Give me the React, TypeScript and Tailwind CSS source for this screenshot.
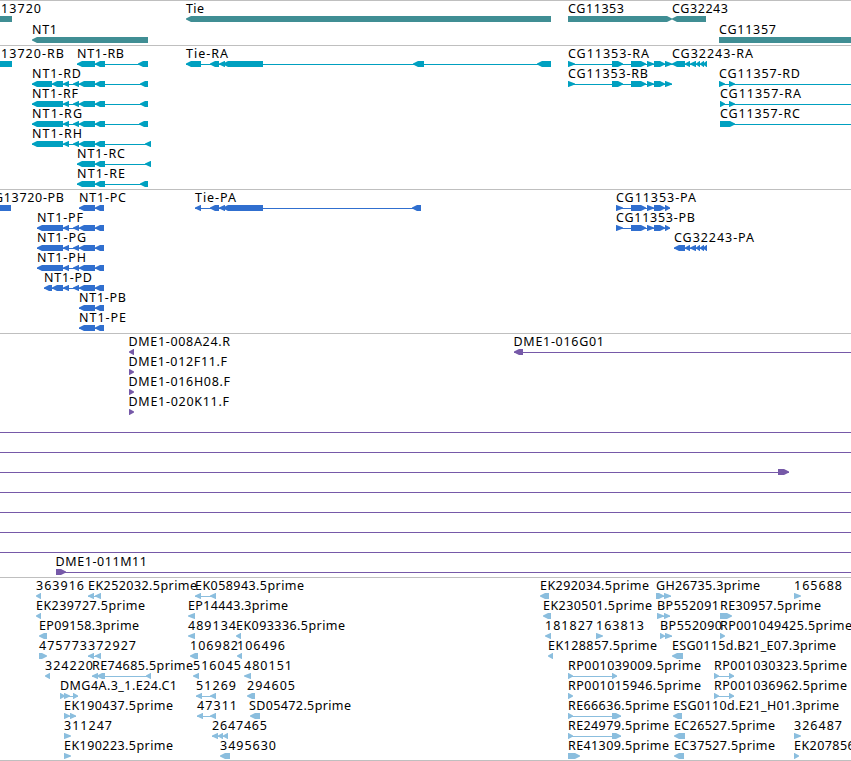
type Dir = 'l' | 'r'

type Feature = {
  label?: string
  // start and end of the label text
  text?: [number, number]
  dir?: Dir
  exons?: [number, number][]
  // overrides the intron line when it runs past the exons
  line?: [number, number]
}

type Track = {
  name: string
  color: string
  rowHeight: number
  className: string
  rows: Feature[][]
}

const WIDTH = 851

const f = (
  label: string,
  x1: number,
  x2: number,
  dir: Dir,
  exons: [number, number][],
  line?: [number, number]
): Feature => ({ label, text: [x1, x2], dir, exons, line })

const through: Feature = { line: [0, WIDTH] }

const nt1Tail: [number, number][] = [[63, 69], [73, 79], [79, 95], [95, 105]]
const nt1ProteinTail: [number, number][] = [[63, 69], [73, 79], [79, 95], [95, 104]]
const cg11353: [number, number][] = [[631, 646], [647, 654], [654, 665]]
const cg32243: [number, number][] = [[685, 690], [690, 696], [696, 700], [700, 704], [703, 707]]

const tracks: Track[] = [
  {
    name: 'genes',
    color: '#408e94',
    rowHeight: 21,
    className: 'pt-px pb-px',
    rows: [
      [
        f('13720', 1, 41, 'l', [[-20, 12]]),
        f('Tie', 186, 204, 'l', [[186, 551]]),
        f('CG11353', 568, 624, 'r', [[568, 672]]),
        f('CG32243', 672, 728, 'l', [[672, 706]]),
      ],
      [
        f('NT1', 32, 57, 'l', [[32, 148]]),
        f('CG11357', 719, 776, 'r', [[719, 900]]),
      ],
    ],
  },
  {
    name: 'transcripts',
    color: '#00a0c0',
    rowHeight: 20,
    className: 'pt-px pb-0.5',
    rows: [
      [
        f('13720-RB', 1, 64, 'l', [[-20, 12]]),
        f('NT1-RB', 77, 124, 'l', [[77, 95], [95, 105], [138, 148]]),
        f('Tie-RA', 186, 228, 'l', [[186, 201], [210, 219], [219, 225], [223, 263], [413, 424], [537, 551]]),
        f('CG11353-RA', 568, 649, 'r', [[568, 575], [612, 623], ...cg11353, [665, 672]]),
        f('CG32243-RA', 672, 753, 'l', [[672, 685], ...cg32243]),
      ],
      [
        f('NT1-RD', 32, 81, 'l', [[32, 52], [52, 63], ...nt1Tail, [140, 148]]),
        f('CG11353-RB', 568, 648, 'r', [[568, 575], [612, 623], ...cg11353, [665, 672]]),
        f('CG11357-RD', 719, 800, 'r', [[719, 725], [729, 735]], [719, WIDTH]),
      ],
      [
        f('NT1-RF', 32, 78, 'l', [[32, 63], ...nt1Tail, [140, 148]]),
        f('CG11357-RA', 720, 801, 'r', [[720, 725], [729, 735]], [720, WIDTH]),
      ],
      [
        f('NT1-RG', 32, 82, 'l', [[32, 63], ...nt1Tail, [139, 148]]),
        f('CG11357-RC', 720, 800, 'r', [[720, 735]], [720, WIDTH]),
      ],
      [f('NT1-RH', 32, 82, 'l', [[32, 63], ...nt1Tail, [145, 151]])],
      [f('NT1-RC', 77, 125, 'l', [[77, 95], [95, 105], [145, 151]])],
      [f('NT1-RE', 77, 125, 'l', [[77, 95], [95, 105], [140, 148]])],
    ],
  },
  {
    name: 'proteins',
    color: '#306fcf',
    rowHeight: 20,
    className: 'pt-px pb-0.5',
    rows: [
      [
        f('G13720-PB', -6, 64, 'l', [[-20, 11]]),
        f('NT1-PC', 79, 126, 'l', [[79, 95], [95, 104]]),
        f('Tie-PA', 195, 236, 'l', [[195, 201], [210, 219], [219, 225], [223, 263], [412, 421]]),
        f('CG11353-PA', 616, 696, 'r', [[616, 623], ...cg11353, [665, 670]]),
      ],
      [
        f('NT1-PF', 37, 83, 'l', [[37, 63], ...nt1ProteinTail]),
        f('CG11353-PB', 616, 695, 'r', [[616, 623], ...cg11353, [665, 670]]),
      ],
      [
        f('NT1-PG', 37, 86, 'l', [[37, 63], ...nt1ProteinTail]),
        f('CG32243-PA', 674, 754, 'l', [[674, 685], ...cg32243]),
      ],
      [f('NT1-PH', 37, 86, 'l', [[37, 63], ...nt1ProteinTail])],
      [f('NT1-PD', 44, 92, 'l', [[44, 52], [52, 63], ...nt1ProteinTail])],
      [f('NT1-PB', 79, 126, 'l', [[79, 95], [95, 104]])],
      [f('NT1-PE', 79, 126, 'l', [[79, 95], [95, 104]])],
    ],
  },
  {
    name: 'clones',
    color: '#7659a8',
    rowHeight: 20,
    className: 'pt-px pb-0.5',
    rows: [
      [
        f('DME1-008A24.R', 128.5, 230, 'l', [[129, 134]]),
        f('DME1-016G01', 513.5, 604, 'l', [[514, 523]], [514, WIDTH]),
      ],
      [f('DME1-012F11.F', 128.5, 227, 'r', [[129, 134]])],
      [f('DME1-016H08.F', 128.5, 230, 'r', [[129, 134]])],
      [f('DME1-020K11.F', 128.5, 229, 'r', [[129, 134]])],
      [through],
      [through],
      [{ dir: 'r', exons: [[778, 789]], line: [0, 789] }],
      [through],
      [through],
      [through],
      [through],
      [f('DME1-011M11', 55.5, 147, 'r', [[56, 66]], [56, WIDTH])],
    ],
  },
  {
    name: 'ests',
    color: '#8bbede',
    rowHeight: 20,
    className: 'pt-px pb-px border-b',
    rows: [
      [
        f('363916', 36, 84, 'l', [[36, 41]]),
        f('EK252032.5prime', 88, 197, 'l', [[88, 94], [95, 101]]),
        f('EK058943.5prime', 195, 304, 'l', [[195, 201], [210, 216]]),
        f('EK292034.5prime', 540, 649, 'l', [[540, 549]]),
        f('GH26735.3prime', 656, 760, 'r', [[656, 664], [664, 671]]),
        f('165688', 794, 842, 'r', [[794, 801]]),
      ],
      [
        f('EK239727.5prime', 36, 145, 'l', [[36, 41]]),
        f('EP14443.3prime', 188, 288, 'l', [[188, 195]]),
        f('EK230501.5prime', 543, 652, 'l', [[543, 551]]),
        f('BP552091', 657, 719, 'r', [[657, 664], [664, 670]]),
        f('RE30957.5prime', 720, 821, 'r', [[720, 732]]),
      ],
      [
        f('EP09158.3prime', 39, 139, 'l', [[39, 47]]),
        f('489134', 188, 236, 'l', [[188, 195]]),
        f('EK093336.5prime', 236, 345, 'l', [[236, 241]]),
        f('181827', 545, 593, 'l', [[545, 551]]),
        f('163813', 596, 644, 'r', [[596, 603]]),
        f('BP552090', 660, 722, 'r', [[660, 665], [665, 672]]),
        f('RP001049425.5prime', 720, 852, 'r', [[720, 725]]),
      ],
      [
        f('475773', 39, 87, 'r', [[39, 47]]),
        f('372927', 88, 136, 'l', [[88, 94], [95, 101]]),
        f('106982', 190, 238, 'l', [[190, 198]]),
        f('106496', 237, 285, 'l', [[237, 242]]),
        f('EK128857.5prime', 548, 657, 'l', [[548, 553]]),
        f('ESG0115d.B21_E07.3prime', 672, 836, 'l', [[672, 683]]),
      ],
      [
        f('324220', 45, 93, 'l', [[45, 50]]),
        f('RE74685.5prime', 92, 193, 'l', [[92, 98], [97, 105], [146, 151]]),
        f('516045', 193, 241, 'l', [[193, 199]]),
        f('480151', 244, 292, 'l', [[244, 251]]),
        f('RP001039009.5prime', 568, 701, 'r', [[568, 573], [612, 617]]),
        f('RP001030323.5prime', 714, 847, 'r', [[714, 719], [729, 734]]),
      ],
      [
        f('DMG4A.3_1.E24.C1', 60, 177, 'r', [[60, 65], [64, 70], [73, 78]]),
        f('51269', 196, 236, 'l', [[196, 202], [210, 216]]),
        f('294605', 247, 295, 'l', [[247, 255]]),
        f('RP001015946.5prime', 568, 701, 'r', [[568, 573]]),
        f('RP001036962.5prime', 714, 847, 'r', [[714, 719], [729, 734]]),
      ],
      [
        f('EK190437.5prime', 64, 173, 'r', [[64, 70], [70, 76]]),
        f('47311', 197, 237, 'l', [[197, 203], [210, 216]]),
        f('SD05472.5prime', 249, 351, 'l', [[250, 260]]),
        f('RE66636.5prime', 568, 669, 'r', [[568, 573], [612, 621]]),
        f('ESG0110d.E21_H01.3prime', 673, 839, 'l', [[673, 682]]),
      ],
      [
        f('311247', 64, 112, 'r', [[64, 71]]),
        f('2647465', 212, 267, 'l', [[212, 218], [218, 223], [223, 228]]),
        f('RE24979.5prime', 568, 669, 'r', [[568, 573], [612, 621]]),
        f('EC26527.5prime', 674, 775, 'l', [[674, 685]]),
        f('326487', 794, 842, 'r', [[794, 801]]),
      ],
      [
        f('EK190223.5prime', 64, 173, 'r', [[64, 71]]),
        f('3495630', 220, 276, 'l', [[220, 230]]),
        f('RE41309.5prime', 568, 669, 'r', [[568, 580]]),
        f('EC37527.5prime', 674, 775, 'l', [[674, 684]]),
        f('EK207856.5prime', 794, 903, 'r', [[794, 799]]),
      ],
    ],
  },
]

// block with a pointed head on the strand side
function exonPath([x1, x2]: [number, number], dir: Dir) {
  const w = x2 - x1
  const head = w <= 7 ? w - 0.5 : 5
  const tip = dir === 'l' ? x1 : x2
  const end = dir === 'l' ? x2 : x1
  const s = dir === 'l' ? 1 : -1
  return `M${tip} 16.4L${tip + s * head} 14L${end} 14L${end} 20L${tip + s * head} 20L${tip} 17.4Z`
}

function FeatureGlyph({ feature, color }: { feature: Feature; color: string }) {
  const { label, text, dir = 'r', exons = [] } = feature
  const line = feature.line ?? (exons.length > 1 ? [exons[0][0], exons[exons.length - 1][1]] : null)

  return (
    <g>
      {line && <line x1={line[0]} x2={line[1]} y1={17.5} y2={17.5} stroke={color} strokeWidth={1} />}
      {exons.map((exon, i) => (
        <path key={i} d={exonPath(exon, dir)} fill={color} />
      ))}
      {label && text && (
        <text x={text[0]} y={11} textLength={text[1] - text[0]} fill="#000">
          {label}
        </text>
      )}
    </g>
  )
}

export default function App() {
  return (
    <main className="w-[851px] h-[761px] overflow-hidden bg-white font-['Noto_Sans',sans-serif] text-[12.5px]">
      {tracks.map((track) => (
        <section key={track.name} className={`border-t border-[#bfbfbf] ${track.className}`}>
          {track.rows.map((row, i) => (
            <svg key={i} className="block overflow-visible" width={WIDTH} height={track.rowHeight}>
              {row.map((feature, j) => (
                <FeatureGlyph key={j} feature={feature} color={track.color} />
              ))}
            </svg>
          ))}
        </section>
      ))}
    </main>
  )
}
